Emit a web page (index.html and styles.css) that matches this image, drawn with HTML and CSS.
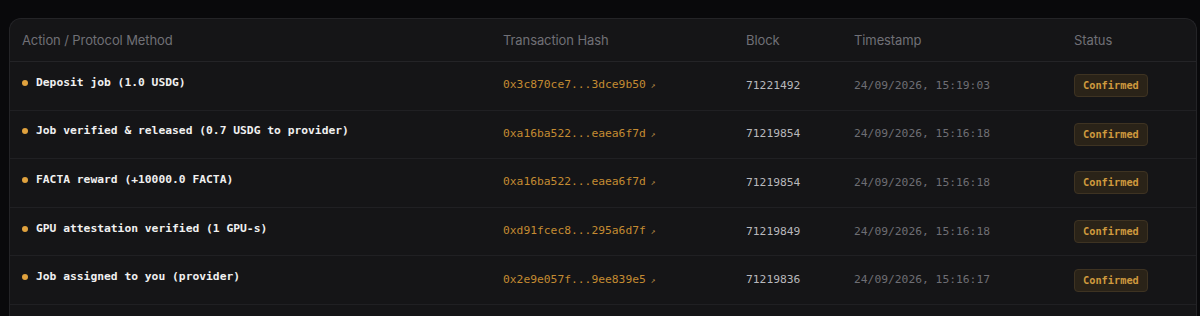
FILE: index.html
```html
<!DOCTYPE html>
<html>
<head>
<meta charset="utf-8">
<link rel="stylesheet" href="styles.css">
</head>
<body>
<div class="card">
  <table class="tx">
    <colgroup>
      <col class="c1"><col class="c2"><col class="c3"><col class="c4"><col class="c5">
    </colgroup>
    <thead>
      <tr><th>Action / Protocol Method</th><th>Transaction Hash</th><th>Block</th><th>Timestamp</th><th>Status</th></tr>
    </thead>
    <tbody>
      <tr>
        <td><span class="action"><span class="dot"></span>Deposit job (1.0 USDG)</span></td>
        <td><span class="hash">0x3c870ce7...3dce9b50<span class="ext">↗</span></span></td>
        <td class="block">71221492</td>
        <td class="time">24/09/2026, 15:19:03</td>
        <td><span class="badge">Confirmed</span></td>
      </tr>
      <tr>
        <td><span class="action"><span class="dot"></span>Job verified &amp; released (0.7 USDG to provider)</span></td>
        <td><span class="hash">0xa16ba522...eaea6f7d<span class="ext">↗</span></span></td>
        <td class="block">71219854</td>
        <td class="time">24/09/2026, 15:16:18</td>
        <td><span class="badge">Confirmed</span></td>
      </tr>
      <tr>
        <td><span class="action"><span class="dot"></span>FACTA reward (+10000.0 FACTA)</span></td>
        <td><span class="hash">0xa16ba522...eaea6f7d<span class="ext">↗</span></span></td>
        <td class="block">71219854</td>
        <td class="time">24/09/2026, 15:16:18</td>
        <td><span class="badge">Confirmed</span></td>
      </tr>
      <tr>
        <td><span class="action"><span class="dot"></span>GPU attestation verified (1 GPU-s)</span></td>
        <td><span class="hash">0xd91fcec8...295a6d7f<span class="ext">↗</span></span></td>
        <td class="block">71219849</td>
        <td class="time">24/09/2026, 15:16:18</td>
        <td><span class="badge">Confirmed</span></td>
      </tr>
      <tr>
        <td><span class="action"><span class="dot"></span>Job assigned to you (provider)</span></td>
        <td><span class="hash">0x2e9e057f...9ee839e5<span class="ext">↗</span></span></td>
        <td class="block">71219836</td>
        <td class="time">24/09/2026, 15:16:17</td>
        <td><span class="badge">Confirmed</span></td>
      </tr>
    </tbody>
  </table>
</div>
</body>
</html>
```
FILE: styles.css
```css
html, body {
  margin: 0;
  background: #09090b;
  height: 316px;
  overflow: hidden;
}
body {
  padding: 18px 3px 0 9px;
  box-sizing: border-box;
  font-family: Inter, "Noto Sans", sans-serif;
}
.card {
  background: #151517;
  border: 1px solid #242427;
  border-bottom: 0;
  border-radius: 12px 12px 0 0;
  overflow: hidden;
  height: 298px;
  box-sizing: border-box;
}
.tx {
  width: 100%;
  border-collapse: collapse;
  table-layout: fixed;
}
.c1 { width: 481px; }
.c2 { width: 243px; }
.c3 { width: 108px; }
.c4 { width: 220px; }
.c5 { width: auto; }
th {
  text-align: left;
  font-weight: 400;
  font-size: 13px;
  color: #707076;
  height: 42px;
  padding: 0 0 0 12px;
  border-bottom: 1px solid #242427;
  letter-spacing: -0.1px;
}
td {
  height: 47.6px;
  padding: 0 0 0 12px;
  border-bottom: 1px solid #202023;
  font-family: "DejaVu Sans Mono", "Liberation Mono", monospace;
  font-size: 11.3px;
  line-height: 14px;
  vertical-align: middle;
  white-space: nowrap;
}
.action {
  display: flex;
  align-items: center;
  color: #f0f0f0;
  font-weight: 700;
  margin-bottom: 6px;
}
.dot {
  width: 6px;
  height: 6px;
  border-radius: 50%;
  background: #e0a23e;
  margin: 0 8px 0 0;
  flex: none;
}
.hash {
  color: #c48b32;
}
.ext {
  font-size: 8px;
  margin-left: 5px;
  color: #b88a45;
}
.block {
  color: #b8b8bc;
}
.time {
  color: #6e6e74;
}
.badge {
  display: inline-block;
  font-size: 10.3px;
  line-height: 13px;
  font-weight: 700;
  color: #cf9a3e;
  background: #2a2318;
  border: 1px solid #3e3322;
  border-radius: 4px;
  padding: 4px 8px 4px;
}
```
